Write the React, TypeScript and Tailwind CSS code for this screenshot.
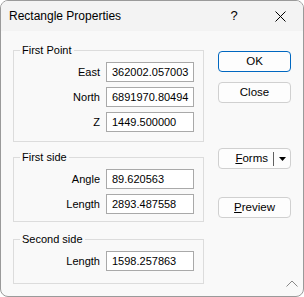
import React from "react";

const font = { fontFamily: '"Liberation Sans", Arial, sans-serif' };

function Row({ label, value }: { label: string; value: string }) {
  return (
    <div className="flex items-center h-[20px]">
      <div className="w-[92px] text-right pr-[6px] text-[11px] text-black">{label}</div>
      <div className="w-[88px] h-[20px] border border-[#a9a9a9] bg-white flex items-center pl-[5px] text-[11px] text-black overflow-hidden whitespace-nowrap">
        {value}
      </div>
    </div>
  );
}

function Group({ title, children, className }: { title: string; children: React.ReactNode; className?: string }) {
  return (
    <div className={"relative border border-[#dcdcdc] " + (className ?? "")}>
      <div className="absolute -top-[8px] left-[6px] px-[2px] bg-[#f9f9f9] text-[11px] leading-[14px] text-black">{title}</div>
      {children}
    </div>
  );
}

function Btn({ children, primary }: { children: React.ReactNode; primary?: boolean }) {
  return (
    <div
      className={
        "h-[21px] w-[73px] rounded-[4px] flex items-center justify-center text-[11.5px] text-black bg-[#fdfdfd] border " +
        (primary ? "border-[#0067c0]" : "border-[#d0d0d0]")
      }
    >
      {children}
    </div>
  );
}

export default function App() {
  return (
    <div style={font} className="w-[304px] h-[297px] flex flex-col border border-[#9a9a9a] rounded-[8px] overflow-hidden bg-[#f9f9f9]">
      <div className="h-[30px] shrink-0 flex items-center bg-[#f3f3f3]">
        <div className="pl-[8px] text-[12px] text-black">Rectangle Properties</div>
        <div className="ml-auto w-[46px] h-[30px] flex items-center justify-center text-[13px] text-black">?</div>
        <div className="w-[46px] h-[30px] flex items-center justify-center">
          <svg width="11" height="11" viewBox="0 0 11 11">
            <path d="M0.5 0.5 L10.5 10.5 M10.5 0.5 L0.5 10.5" stroke="#000" strokeWidth="1" fill="none" />
          </svg>
        </div>
      </div>
      <div className="flex-1 flex px-[12px] pt-[19px]">
        <div className="w-[191px] flex flex-col">
          <Group title="First Point" className="h-[92px] pt-[11px] flex flex-col gap-[5px]">
            <Row label="East" value="362002.057003" />
            <Row label="North" value="6891970.80494" />
            <Row label="Z" value="1449.500000" />
          </Group>
          <Group title="First side" className="mt-[15px] h-[65px] pt-[11px] flex flex-col gap-[5px]">
            <Row label="Angle" value="89.620563" />
            <Row label="Length" value="2893.487558" />
          </Group>
          <Group title="Second side" className="mt-[17px] h-[45px] pt-[11px] flex flex-col">
            <Row label="Length" value="1598.257863" />
          </Group>
        </div>
        <div className="ml-[14px] flex flex-col">
          <div className="mt-[1px]">
            <Btn primary>OK</Btn>
          </div>
          <div className="mt-[10px]">
            <Btn>Close</Btn>
          </div>
          <div className="mt-[45px]">
            <div className="h-[21px] w-[73px] rounded-[4px] flex items-center text-[11.5px] text-black bg-[#fdfdfd] border border-[#d0d0d0]">
              <div className="flex-1 text-right pr-[5px]">
                <span className="underline">F</span>orms
              </div>
              <div className="w-px h-[14px] bg-[#606060]" />
              <div className="w-[16px] flex items-center justify-center">
                <svg width="7" height="4" viewBox="0 0 7 4">
                  <path d="M0 0 L7 0 L3.5 4 Z" fill="#000" />
                </svg>
              </div>
            </div>
          </div>
          <div className="mt-[28px]">
            <Btn>
              <span>
                <span className="underline">P</span>review
              </span>
            </Btn>
          </div>
        </div>
      </div>
      <div className="relative h-0">
        <svg className="absolute right-[5px] -top-[16px]" width="12" height="7" viewBox="0 0 12 7">
          <path d="M0.5 6.5 L6 1 L11.5 6.5" stroke="#888" strokeWidth="1" fill="none" />
        </svg>
      </div>
    </div>
  );
}
